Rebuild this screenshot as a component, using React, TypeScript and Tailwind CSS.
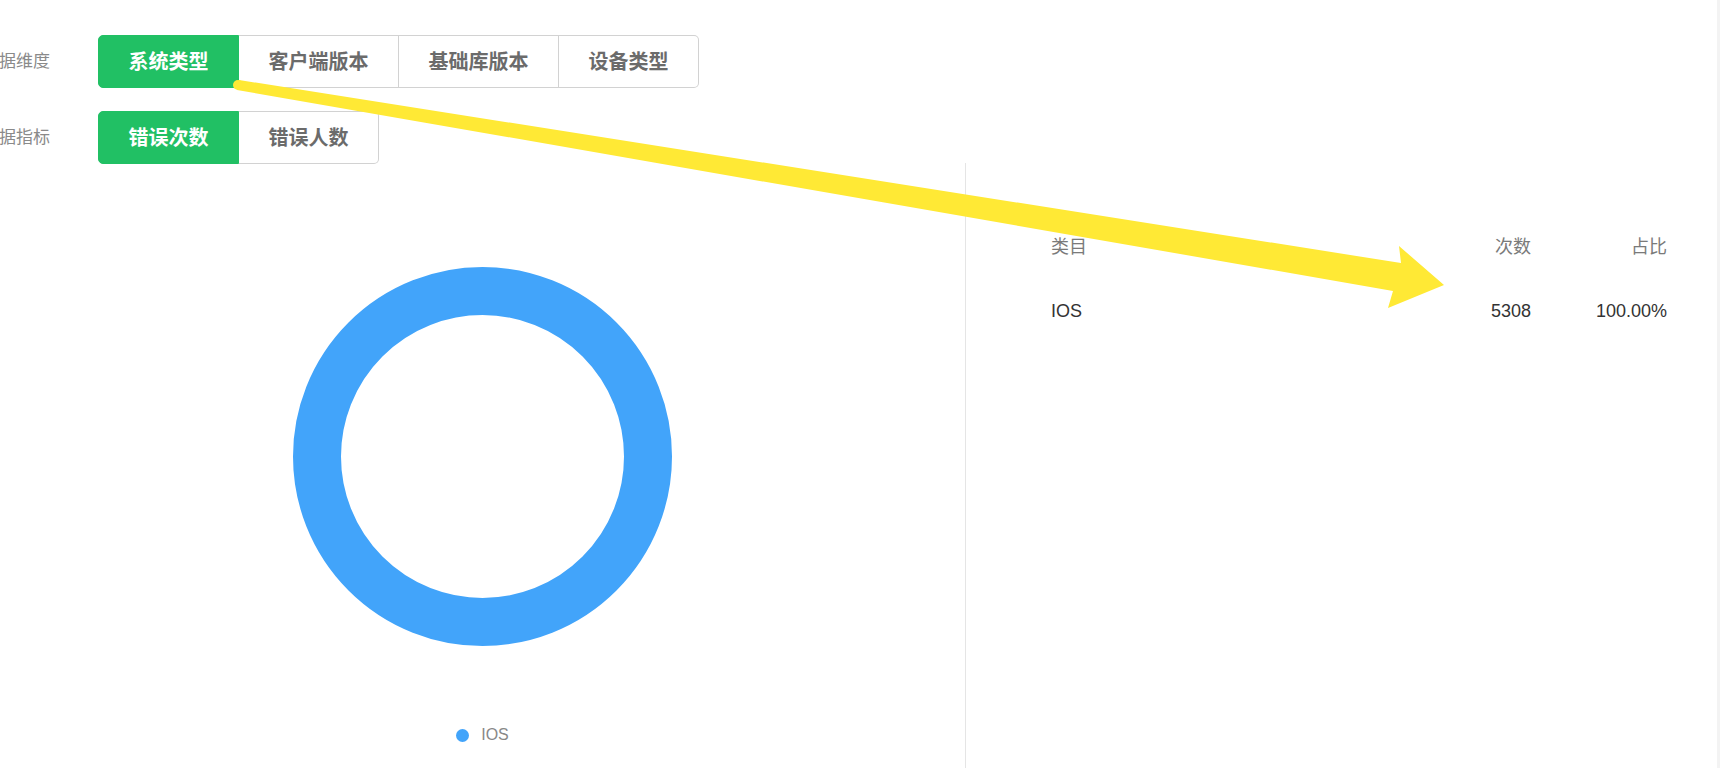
import React from "react";

const FONT = '"Liberation Sans", "Noto Sans CJK SC", sans-serif';

function Segmented({ items, active }: { items: string[]; active: number }) {
  return (
    <div className="flex">
      {items.map((t, i) => {
        const first = i === 0;
        const last = i === items.length - 1;
        const on = i === active;
        return (
          <div
            key={t}
            className={
              "h-[53px] px-[29.5px] flex items-center text-[20px] border-y " +
              (first ? "rounded-l-[5px] border-l " : "") +
              (last ? "rounded-r-[5px] border-r " : "border-r ") +
              (on
                ? "bg-[#21c064] border-[#21c064] text-white font-bold"
                : "bg-white border-[#d2d2d2] text-[#6b6b6b] font-semibold")
            }
          >
            {t}
          </div>
        );
      })}
    </div>
  );
}

function FilterRow({ label, items }: { label: string; items: string[] }) {
  return (
    <div className="flex items-center">
      <div className="w-[50px] mr-[48px] flex justify-end overflow-hidden whitespace-nowrap text-[17px] text-[#8a8a8a]">
        {label}
      </div>
      <Segmented items={items} active={0} />
    </div>
  );
}

export default function App() {
  return (
    <div className="relative w-[1720px] h-[768px] overflow-hidden bg-white flex" style={{ fontFamily: FONT }}>
      <div className="flex-1 flex flex-col">
        {/* filters */}
        <div className="pt-[35px] flex flex-col gap-[23px]">
          <FilterRow label="数据维度" items={["系统类型", "客户端版本", "基础库版本", "设备类型"]} />
          <FilterRow label="数据指标" items={["错误次数", "错误人数"]} />
        </div>

        {/* body */}
        <div className="flex-1 flex">
          {/* donut */}
          <div className="w-[965px] flex flex-col items-center pt-[103px]">
            <svg width="379" height="379" viewBox="0 0 379 379">
              <circle cx="189.5" cy="189.5" r="165.5" fill="none" stroke="#42a4fa" strokeWidth="48" />
            </svg>
            <div className="mt-[77px] flex items-center gap-[12px] text-[16px] text-[#888]">
              <span className="w-[13px] h-[13px] rounded-full bg-[#42a4fa]" />
              <span>IOS</span>
            </div>
          </div>

          {/* table */}
          <div className="flex-1 border-l border-[#e5e5e5] pl-[85px] pr-[50px] pt-[52px] mt-[-1px]">
            <div className="grid grid-cols-[1fr_auto_136px] text-[18px]">
              <div className="h-[64px] flex items-center text-[#7a7a7a]">类目</div>
              <div className="h-[64px] flex items-center justify-end text-[#7a7a7a]">次数</div>
              <div className="h-[64px] flex items-center justify-end text-[#7a7a7a]">占比</div>
              <div className="h-[64px] flex items-center text-[#333]">IOS</div>
              <div className="h-[64px] flex items-center justify-end text-[#333]">5308</div>
              <div className="h-[64px] flex items-center justify-end text-[#333]">100.00%</div>
            </div>
          </div>
        </div>
      </div>
      <div className="w-[3px] bg-[#f3f3f3]" />

      {/* annotation arrow */}
      <svg className="absolute inset-0 pointer-events-none" width="1720" height="768" viewBox="0 0 1720 768">
        <polygon
          points="239,80 1401,263 1399,246 1444,285 1388,308 1393,291 237,90"
          fill="#ffe935"
        />
        <circle cx="238" cy="85" r="5" fill="#ffe935" />
      </svg>
    </div>
  );
}
